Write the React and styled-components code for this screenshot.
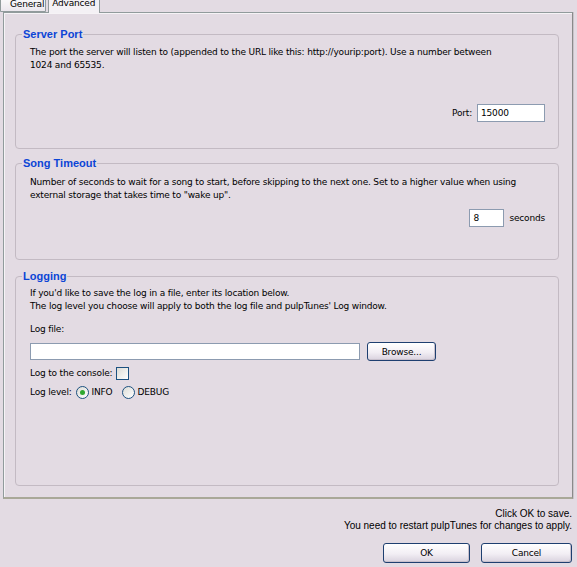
import React, { useState } from 'react';
import styled, { createGlobalStyle } from 'styled-components';

const Global = createGlobalStyle`
  html, body {
    margin: 0;
    padding: 0;
    background: #e3dbe3;
  }
  body {
    font-family: "DejaVu Sans", "Liberation Sans", sans-serif;
    font-size: 9px;
    letter-spacing: -0.18px;
    color: #000;
  }
`;

const Page = styled.div`
  width: 577px;
  height: 567px;
  overflow: hidden;
  display: flex;
  flex-direction: column;
  background: #e3dbe3;
`;

const TabStrip = styled.div`
  display: flex;
  align-items: flex-end;
  height: 18px;
  margin-top: -6px;
  position: relative;
  z-index: 1;
`;

const Tab = styled.div`
  box-sizing: border-box;
  height: ${({ active }) => (active ? '20px' : '18px')};
  margin-bottom: ${({ active }) => (active ? '-1px' : '0')};
  margin-left: ${({ active }) => (active ? '2px' : '0')};
  padding: 3px ${({ active }) => (active ? '4px' : '1px')} 0 ${({ active }) => (active ? '3px' : '9px')};
  border: 1px solid #919b9c;
  border-bottom: ${({ active }) => (active ? 'none' : '1px solid #919b9c')};
  border-radius: 3px 3px 0 0;
  background: ${({ active }) =>
    active ? '#f4f1f5' : 'linear-gradient(180deg, #ffffff 0%, #ece7ee 100%)'};
  line-height: 12px;
  white-space: nowrap;
`;

const Panel = styled.div`
  box-sizing: border-box;
  width: 570px;
  height: 487px;
  margin-left: 3px;
  padding: 14px 13px 0 11px;
  border: 1px solid #919b9c;
  border-right-color: #8a8a8a;
  border-bottom: 2px solid #a9a898;
  box-shadow: inset 1px 1px 0 #f6f3f6, 1px 0 0 #c9c3c9;
  display: flex;
  flex-direction: column;
`;

const Group = styled.fieldset`
  box-sizing: border-box;
  height: ${({ h }) => h}px;
  margin: ${({ top }) => top}px 0 0 0;
  padding: 0 14px;
  border: 1px solid #c3bac3;
  border-radius: 4px;
  min-width: 0;
  display: flex;
  flex-direction: column;
`;

const Legend = styled.legend`
  margin-left: -8px;
  padding: 0 1px;
  font-family: "Liberation Sans", Arial, sans-serif;
  font-weight: bold;
  font-size: 11px;
  letter-spacing: 0;
  line-height: 14px;
  color: #0c45d6;
`;

const Text = styled.p`
  margin: ${({ top }) => top}px 0 0 0;
  line-height: 13px;
`;

const Row = styled.div`
  display: flex;
  align-items: center;
  justify-content: ${({ end }) => (end ? 'flex-end' : 'flex-start')};
  gap: ${({ gap }) => gap || 5}px;
  margin-top: ${({ top }) => top}px;
  margin-right: ${({ end }) => (end ? '-1px' : '0')};
  line-height: 13px;
`;

const Field = styled.input`
  box-sizing: border-box;
  width: ${({ w }) => w}px;
  height: ${({ h }) => h || 18}px;
  margin: 0;
  padding: 0 3px;
  border: 1px solid #8c9bb0;
  background: #fff;
  font-family: "DejaVu Sans", sans-serif;
  font-size: 9px;
  letter-spacing: -0.18px;
  color: #000;
  outline: none;
`;

const Button = styled.button`
  box-sizing: border-box;
  width: ${({ w }) => w}px;
  height: ${({ h }) => h || 20}px;
  margin: 0;
  padding: 0;
  border: 1px solid #1e3f70;
  border-radius: 3px;
  background: linear-gradient(180deg, #ffffff 0%, #f2eef4 55%, #d9d2de 100%);
  box-shadow: inset -1px -1px 0 #c8c0cc;
  font-family: "DejaVu Sans", sans-serif;
  font-size: 9px;
  letter-spacing: -0.18px;
  color: #000;
`;

const Check = styled.span`
  box-sizing: border-box;
  display: inline-block;
  width: 13px;
  height: 13px;
  border: 1px solid #1c5180;
  background: linear-gradient(135deg, #dcdcd6 0%, #ffffff 100%);
`;

const Radio = styled.span`
  box-sizing: border-box;
  display: inline-flex;
  align-items: center;
  justify-content: center;
  width: 13px;
  height: 13px;
  border: 1px solid #1c5180;
  border-radius: 50%;
  background: linear-gradient(135deg, #dcdcd6 0%, #ffffff 100%);
  &::after {
    content: '';
    width: 5px;
    height: 5px;
    border-radius: 50%;
    background: ${({ on }) => (on ? '#2fa82f' : 'transparent')};
  }
`;

const Option = styled.label`
  display: inline-flex;
  align-items: center;
  gap: 3px;
  margin-left: ${({ left }) => left || 0}px;
`;

const Footer = styled.div`
  display: flex;
  flex-direction: column;
  align-items: flex-end;
  padding: 9px 5px 0 0;
  font-family: "Liberation Sans", Arial, sans-serif;
  font-size: 10px;
  letter-spacing: 0;
  line-height: 12px;
`;

const Buttons = styled.div`
  display: flex;
  gap: 11px;
  margin-top: 11px;
`;

export default function App() {
  const [level, setLevel] = useState('INFO');

  return (
    <Page>
      <Global />
      <TabStrip>
        <Tab>General</Tab>
        <Tab active>Advanced</Tab>
      </TabStrip>
      <Panel>
        <Group h={122} top={0}>
          <Legend>Server Port</Legend>
          <Text top={5}>
            The port the server will listen to (appended to the URL like this: http://yourip:port). Use a number between
            <br />
            1024 and 65535.
          </Text>
          <Row end top={32}>
            <span>Port:</span>
            <Field w={68} defaultValue="15000" />
          </Row>
        </Group>

        <Group h={104} top={7}>
          <Legend>Song Timeout</Legend>
          <Text top={6}>
            Number of seconds to wait for a song to start, before skipping to the next one. Set to a higher value when using
            <br />
            external storage that takes time to "wake up".
          </Text>
          <Row end top={7}>
            <Field w={35} defaultValue="8" />
            <span>seconds</span>
          </Row>
        </Group>

        <Group h={217} top={9}>
          <Legend>Logging</Legend>
          <Text top={4}>
            If you'd like to save the log in a file, enter its location below.
            <br />
            The log level you choose will apply to both the log file and pulpTunes' Log window.
          </Text>
          <Text top={10}>Log file:</Text>
          <Row top={6} gap={7}>
            <Field w={330} h={17} />
            <Button w={69} h={19}>Browse...</Button>
          </Row>
          <Row top={6} gap={4}>
            <span>Log to the console:</span>
            <Check />
          </Row>
          <Row top={6} gap={4}>
            <span>Log level:</span>
            <Option onClick={() => setLevel('INFO')}>
              <Radio on={level === 'INFO'} />
              INFO
            </Option>
            <Option left={5} onClick={() => setLevel('DEBUG')}>
              <Radio on={level === 'DEBUG'} />
              DEBUG
            </Option>
          </Row>
        </Group>
      </Panel>
      <Footer>
        <span>Click OK to save.</span>
        <span>You need to restart pulpTunes for changes to apply.</span>
        <Buttons>
          <Button w={87}>OK</Button>
          <Button w={91}>Cancel</Button>
        </Buttons>
      </Footer>
    </Page>
  );
}
